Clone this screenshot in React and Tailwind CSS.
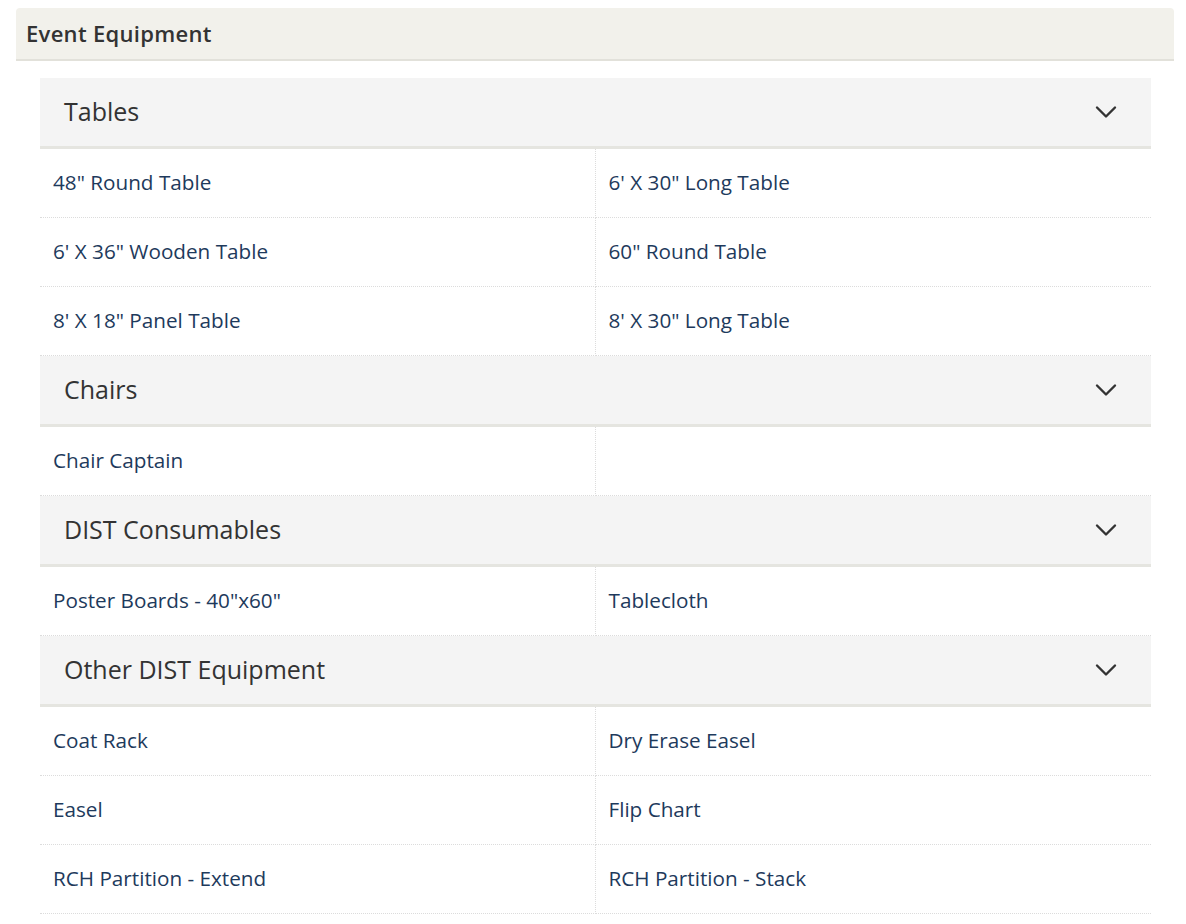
import React from 'react';

const sections = [
  {
    title: 'Tables',
    items: [
      '48" Round Table',
      '6\' X 30" Long Table',
      '6\' X 36" Wooden Table',
      '60" Round Table',
      '8\' X 18" Panel Table',
      '8\' X 30" Long Table',
    ],
  },
  { title: 'Chairs', items: ['Chair Captain', ''] },
  { title: 'DIST Consumables', items: ['Poster Boards - 40"x60"', 'Tablecloth'] },
  {
    title: 'Other DIST Equipment',
    items: [
      'Coat Rack',
      'Dry Erase Easel',
      'Easel',
      'Flip Chart',
      'RCH Partition - Extend',
      'RCH Partition - Stack',
    ],
  },
];

const Chevron = () => (
  <svg width="22" height="14" viewBox="0 0 22 14" fill="none">
    <path d="M2 2.5l9 9 9-9" stroke="#333" strokeWidth="2.4" strokeLinecap="round" strokeLinejoin="round" />
  </svg>
);

const App = () => {
  return (
    <div className="min-h-screen bg-white pt-2 pl-4 pr-3 font-['Open_Sans',sans-serif]">
      {/* Panel title */}
      <div className="h-[53px] bg-[#f2f1eb] rounded-t-[4px] border-b-2 border-[#e2e1da] flex items-center px-[10px]">
        <h1 className="text-[22px] font-semibold tracking-[0.3px] text-[#333]">Event Equipment</h1>
      </div>

      <div className="ml-6 mr-[23px] mt-[17px]">
        {sections.map((section) => (
          <div key={section.title}>
            <div className="h-[71px] bg-[#f4f4f4] border-b-[3px] border-[#e5e5e0] flex items-center justify-between pl-6 pr-[34px]">
              <span className="text-[25px] text-[#333]">{section.title}</span>
              <Chevron />
            </div>
            <div className="grid grid-cols-2">
              {section.items.map((item, i) => (
                <div
                  key={i}
                  className={`h-[69px] flex items-center pl-[13px] border-b border-dotted border-[#dcdcdc] text-[20.7px] text-[#1e3a5c] ${
                    i % 2 === 0 ? 'border-r' : ''
                  }`}
                >
                  {item}
                </div>
              ))}
            </div>
          </div>
        ))}
      </div>
    </div>
  );
};

export default App;
